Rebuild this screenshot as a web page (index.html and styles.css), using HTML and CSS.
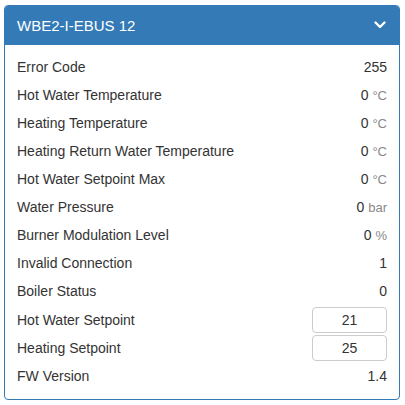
FILE: index.html
```html
<!DOCTYPE html>
<html>
<head>
<meta charset="utf-8">
<link rel="stylesheet" href="styles.css">
</head>
<body>
<div class="panel">
  <div class="panel-heading">
    <span class="title">WBE2-I-EBUS 12</span>
    <svg class="chev" width="12" height="8" viewBox="0 0 12 8"><path d="M1.5 1.5 L6 6 L10.5 1.5" fill="none" stroke="#fff" stroke-width="2.4" stroke-linecap="round" stroke-linejoin="round"/></svg>
  </div>
  <div class="panel-body">
    <div class="row"><span class="label">Error Code</span><span class="value">255</span></div>
    <div class="row"><span class="label">Hot Water Temperature</span><span class="value">0 <span class="unit">°C</span></span></div>
    <div class="row"><span class="label">Heating Temperature</span><span class="value">0 <span class="unit">°C</span></span></div>
    <div class="row"><span class="label">Heating Return Water Temperature</span><span class="value">0 <span class="unit">°C</span></span></div>
    <div class="row"><span class="label">Hot Water Setpoint Max</span><span class="value">0 <span class="unit">°C</span></span></div>
    <div class="row"><span class="label">Water Pressure</span><span class="value">0 <span class="unit">bar</span></span></div>
    <div class="row"><span class="label">Burner Modulation Level</span><span class="value">0 <span class="unit">%</span></span></div>
    <div class="row"><span class="label">Invalid Connection</span><span class="value">1</span></div>
    <div class="row"><span class="label">Boiler Status</span><span class="value">0</span></div>
    <div class="row row-input"><span class="label">Hot Water Setpoint</span><input class="num" type="text" value="21"></div>
    <div class="row"><span class="label">Heating Setpoint</span><input class="num" type="text" value="25"></div>
    <div class="row"><span class="label">FW Version</span><span class="value">1.4</span></div>
  </div>
</div>
</body>
</html>
```
FILE: styles.css
```css
html, body {
  margin: 0;
  padding: 0;
  background: #fff;
}
body {
  font-family: "Liberation Sans", Arial, sans-serif;
  font-size: 14px;
  color: #333;
}
.panel {
  margin: 5px 5px 5px 4px;
  width: 396px;
  height: 395px;
  box-sizing: border-box;
  border: 1px solid #337ab7;
  border-radius: 4px;
  overflow: hidden;
}
.panel-heading {
  background: #337ab7;
  color: #fff;
  height: 40px;
  margin: -1px -1px 0 -1px;
  display: flex;
  align-items: center;
  justify-content: space-between;
  padding: 0 14px 0 13px;
  font-size: 15px;
}
.title {
  padding-top: 1px;
}
.chev {
  display: block;
}
.panel-body {
  padding: 8px 12px 0 12px;
}
.row {
  height: 28px;
  display: flex;
  align-items: center;
  justify-content: space-between;
}
.row-input {
  height: 29px;
}
.value {
  color: #333;
}
.unit {
  color: #888;
  font-size: 13px;
}
.num {
  width: 75px;
  height: 26px;
  box-sizing: border-box;
  border: 1px solid #ccc;
  border-radius: 4px;
  font-family: "Liberation Sans", Arial, sans-serif;
  font-size: 14px;
  color: #333;
  text-align: center;
  padding: 0;
  margin: 0;
}
```
